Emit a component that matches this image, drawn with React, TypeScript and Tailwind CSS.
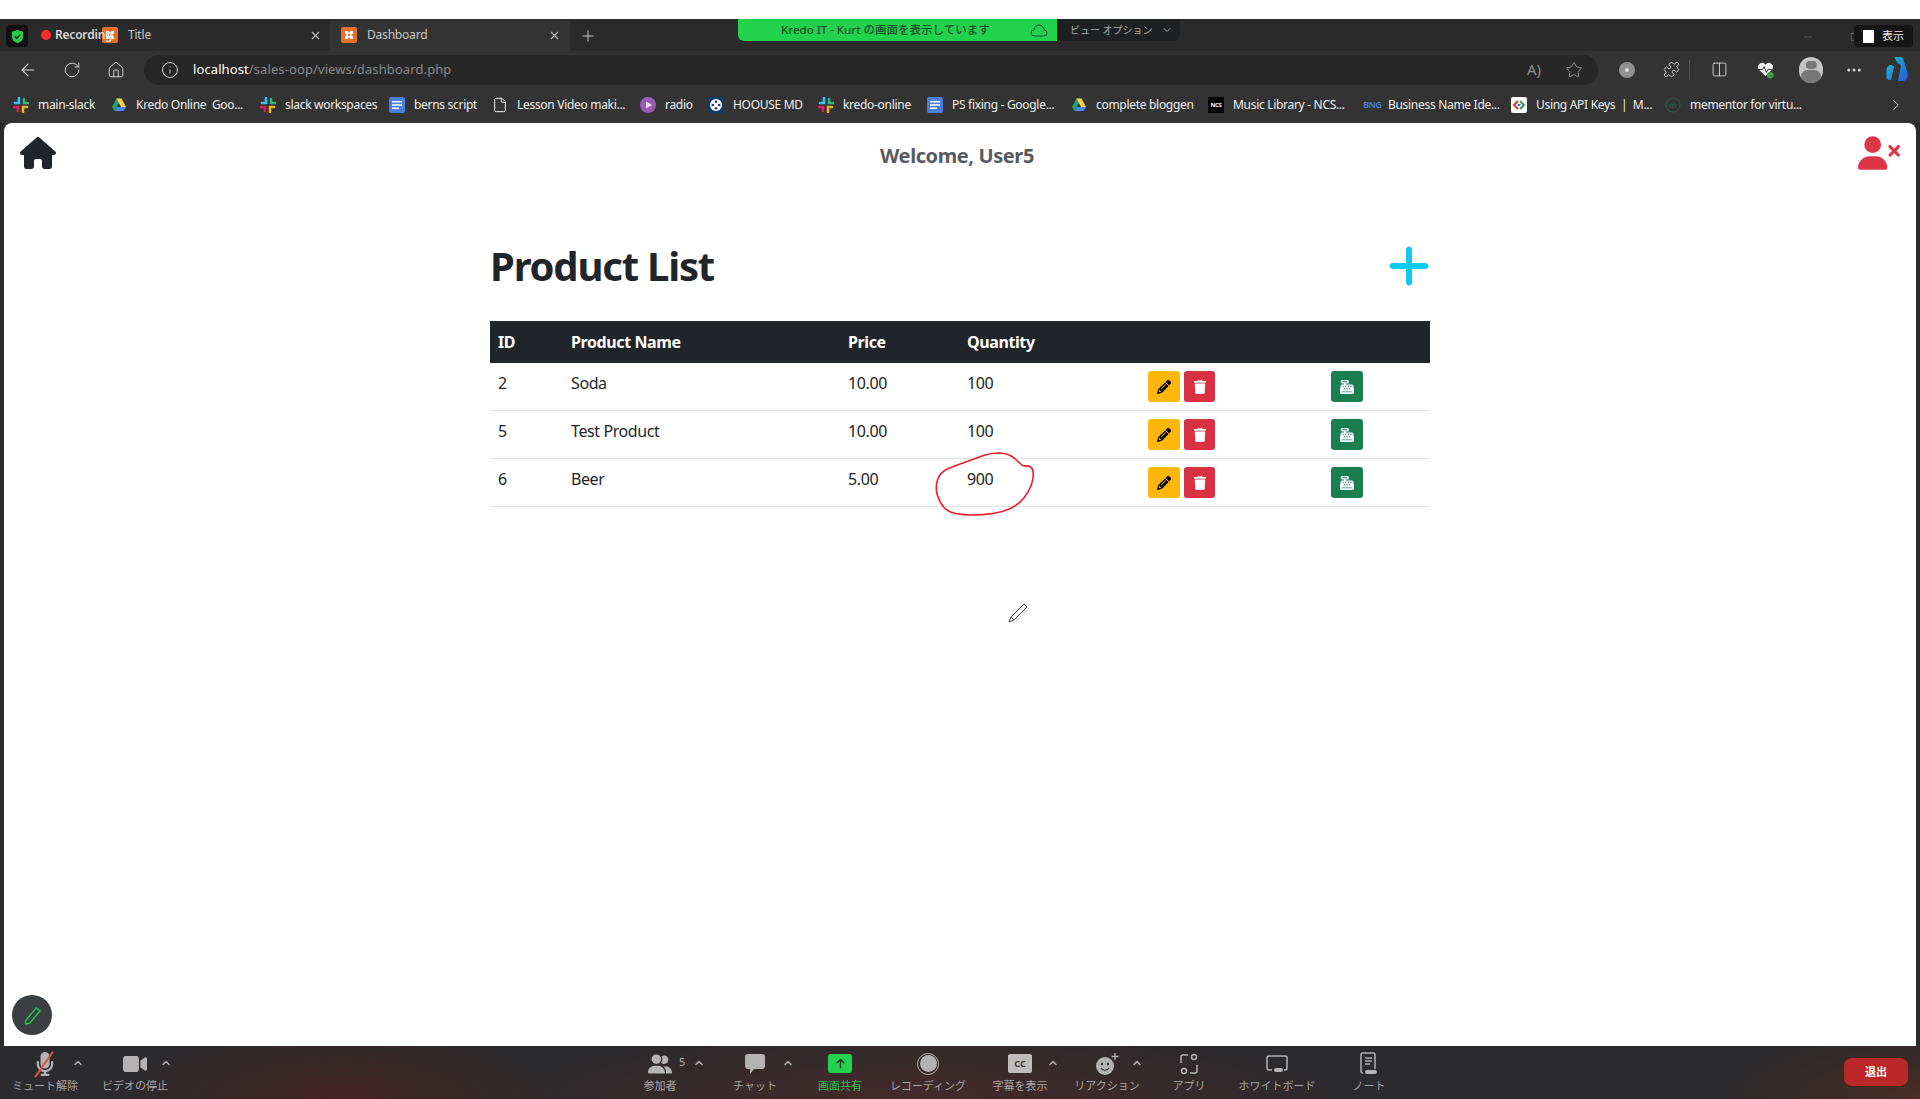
import type { ReactNode } from "react";
import {
  ArrowLeft,
  ChevronDown,
  ChevronRight,
  ChevronUp,
  Columns2,
  Ellipsis,
  File,
  Home,
  Info,
  Minus,
  Plus,
  Puzzle,
  RotateCw,
  Square,
  Star,
  X,
} from "lucide-react";
import {
  FaArrowUp,
  FaCashRegister,
  FaHouse,
  FaMicrophone,
  FaPencil,
  FaPlus,
  FaTrash,
  FaUserGroup,
  FaUserXmark,
  FaVideo,
} from "react-icons/fa6";

const UI_FONT = "font-['Noto_Sans','Noto_Sans_CJK_JP',sans-serif]";

function XamppIcon() {
  return (
    <svg viewBox="0 0 16 16" className="h-4 w-4 shrink-0">
      <rect width="16" height="16" rx="2" fill="#e8702a" />
      <path d="M4 4h2.500L8 6l1.500-2H12v2.500L10 8l2 1.500V12H9.500L8 10l-1.500 2H4V9.500L6 8 4 6.500z" fill="#fff" />
      <rect x="7" y="7" width="2" height="2" fill="#e8702a" />
    </svg>
  );
}

function SlackIcon() {
  return (
    <svg viewBox="0 0 16 16" className="h-4 w-4">
      <path d="M6 1v5H2" stroke="#36c5f0" strokeWidth="2.600" strokeLinecap="round" fill="none" />
      <path d="M15 6h-4V2" stroke="#2eb67d" strokeWidth="2.600" strokeLinecap="round" fill="none" />
      <path d="M10 15v-5h4" stroke="#ecb22e" strokeWidth="2.600" strokeLinecap="round" fill="none" />
      <path d="M1 10h4v4" stroke="#e01e5a" strokeWidth="2.600" strokeLinecap="round" fill="none" />
    </svg>
  );
}

function DriveIcon() {
  return (
    <svg viewBox="0 0 16 16" className="h-4 w-4">
      <path d="M5.500 1.500h5L6 9.500 3.500 14 1 10z" fill="#1fa463" />
      <path d="M10.500 1.500 15 10h-5L5.500 1.500z" fill="#ffd04b" />
      <path d="M3.500 14 6 10h9l-2.500 4z" fill="#4688f1" />
    </svg>
  );
}

function DocsIcon() {
  return (
    <svg viewBox="0 0 16 16" className="h-4 w-4">
      <rect width="16" height="16" rx="2" fill="#4a7fe0" />
      <path d="M3 4h10v1.500H3zM3 7.300h10v1.500H3zM3 10.600h7v1.500H3z" fill="#fff" />
    </svg>
  );
}

function RadioIcon() {
  return (
    <svg viewBox="0 0 16 16" className="h-4 w-4">
      <circle cx="8" cy="8" r="8" fill="#9a5fb4" />
      <path d="M6 4.500 12 8l-6 3.500z" fill="#f2dff5" />
    </svg>
  );
}

function ReelIcon() {
  return (
    <svg viewBox="0 0 16 16" className="h-4 w-4">
      <rect width="16" height="16" fill="#123a6b" />
      <circle cx="8" cy="8" r="6" fill="#fff" />
      <circle cx="8" cy="4.800" r="1.300" fill="#123a6b" />
      <circle cx="8" cy="11.200" r="1.300" fill="#123a6b" />
      <circle cx="4.800" cy="8" r="1.300" fill="#123a6b" />
      <circle cx="11.200" cy="8" r="1.300" fill="#123a6b" />
    </svg>
  );
}

function NcsIcon() {
  return (
    <span className="flex h-4 w-4 items-center justify-center bg-black text-[6px] font-bold leading-none text-white">
      NCS
    </span>
  );
}

function BngIcon() {
  return <span className="block w-4 text-[9px] font-semibold leading-4 tracking-tighter text-[#4a7fe0]">BNG</span>;
}

function ApiIcon() {
  return (
    <svg viewBox="0 0 16 16" className="h-4 w-4">
      <rect width="16" height="16" rx="2" fill="#fff" />
      <path d="M7 4 3 8l4 4" stroke="#d93a3a" strokeWidth="2" fill="none" />
      <path d="M9 4l4 4-4 4" stroke="#2e9e56" strokeWidth="2" fill="none" />
      <path d="M6.500 8h3" stroke="#4a6fe0" strokeWidth="2" />
    </svg>
  );
}

function MementorIcon() {
  return (
    <svg viewBox="0 0 16 16" className="h-4 w-4">
      <circle cx="8" cy="8" r="7" stroke="#2f5a4c" fill="none" />
      <path d="M5 11V7m3 4V7m3 4V7M5 7.500c1-1 3-1 3 0 0-1 3-1 3 0" stroke="#2f5a4c" fill="none" />
    </svg>
  );
}

type Bookmark = { label: string; icon: ReactNode; width: string };

const bookmarks: Bookmark[] = [
  { label: "main-slack", icon: <SlackIcon />, width: "w-[98px]" },
  { label: "Kredo Online  Goo...", icon: <DriveIcon />, width: "w-[149px]" },
  { label: "slack workspaces", icon: <SlackIcon />, width: "w-[129px]" },
  { label: "berns script", icon: <DocsIcon />, width: "w-[103px]" },
  { label: "Lesson Video maki...", icon: <File size={16} strokeWidth={1.5} />, width: "w-[148px]" },
  { label: "radio", icon: <RadioIcon />, width: "w-[68px]" },
  { label: "HOOUSE MD", icon: <ReelIcon />, width: "w-[110px]" },
  { label: "kredo-online", icon: <SlackIcon />, width: "w-[109px]" },
  { label: "PS fixing - Google...", icon: <DocsIcon />, width: "w-[144px]" },
  { label: "complete bloggen", icon: <DriveIcon />, width: "w-[137px]" },
  { label: "Music Library - NCS...", icon: <NcsIcon />, width: "w-[155px]" },
  { label: "Business Name Ide...", icon: <BngIcon />, width: "w-[148px]" },
  { label: "Using API Keys  |  M...", icon: <ApiIcon />, width: "w-[154px]" },
  { label: "mementor for virtu...", icon: <MementorIcon />, width: "w-[200px]" },
];

type Product = { id: number; name: string; price: string; quantity: number };

const products: Product[] = [
  { id: 2, name: "Soda", price: "10.00", quantity: 100 },
  { id: 5, name: "Test Product", price: "10.00", quantity: 100 },
  { id: 6, name: "Beer", price: "5.00", quantity: 900 },
];

// red pen loop round the 900, traced from the shared screen
const scribble = [
  [93, 21], [102, 20], [104, 32], [99, 47], [88, 60], [73, 67], [53, 70], [33, 70], [18, 67],
  [10, 58], [5, 43], [10, 27], [27, 20], [47, 13], [60, 8], [77, 8], [90, 17],
];

function smoothPath(points: number[][]) {
  let d = `M${points[0][0]} ${points[0][1]}`;
  for (let i = 1; i < points.length - 1; i++) {
    const midX = (points[i][0] + points[i + 1][0]) / 2;
    const midY = (points[i][1] + points[i + 1][1]) / 2;
    d += ` Q${points[i][0]} ${points[i][1]} ${midX} ${midY}`;
  }
  return d + ` L${points[0][0]} ${points[0][1]}`;
}

function BrowserTab({ title, active }: { title: string; active?: boolean }) {
  return (
    <div
      className={`flex h-8 items-center ${
        active ? "w-[240px] rounded-t-md bg-[#333333] pl-[11px] pr-[9px]" : "w-[228px] pl-0 pr-[8px]"
      }`}
    >
      <XamppIcon />
      <span className="ml-[10px] flex-1 text-[12px] tracking-[-0.2px] text-[#c8c8c8]">{title}</span>
      <X size={13} className="text-[#bdbdbd]" />
    </div>
  );
}

function TabBar() {
  return (
    <div className="flex h-8 shrink-0 items-end bg-[#2a2a2a] pl-[102px]">
      <BrowserTab title="Title" />
      <BrowserTab title="Dashboard" active />
      <Plus size={18} strokeWidth={1.3} className="mb-[6px] ml-[9px] text-[#c8c8c8]" />
      <div className="mb-[8px] ml-auto flex items-center pr-[60px] text-[#9a9a9a]">
        <Minus size={12} strokeWidth={1} />
        <Square size={10} strokeWidth={1} className="ml-[36px]" />
      </div>
    </div>
  );
}

function ToolBar() {
  return (
    <div className="flex h-[37px] shrink-0 items-center bg-[#333333] text-[#d6d6d6]">
      <ArrowLeft size={20} strokeWidth={1.3} className="ml-[18px]" />
      <RotateCw size={18} strokeWidth={1.3} className="ml-[25px]" />
      <Home size={18} strokeWidth={1.3} className="ml-[26px]" />
      <div className="ml-[19px] flex h-[30px] w-[1454px] items-center rounded-full bg-[#272727]">
        <Info size={18} strokeWidth={1.3} className="ml-[17px]" />
        <span className="ml-[14px] text-[13px] tracking-[0.1px] text-white">
          localhost<span className="text-[#8a8a8a]">/sales-oop/views/dashboard.php</span>
        </span>
        <span className="ml-auto text-[15px] leading-none text-[#8f8f8f]">A)</span>
        <Star size={18} strokeWidth={1.2} className="ml-[24px] mr-[15px] text-[#9a9a9a]" />
      </div>
      <div className="ml-[21px] flex h-4 w-4 items-center justify-center rounded-full bg-[#8f8f8f]">
        <span className="h-1 w-1 rounded-full bg-[#dcdcdc]" />
      </div>
      <Puzzle size={17} strokeWidth={1.3} className="ml-[28px]" />
      <div className="ml-[9px] h-5 w-px bg-[#505050]" />
      <Columns2 size={17} strokeWidth={1.3} className="ml-[21px]" />
      <svg viewBox="0 0 20 20" className="ml-[28px] h-[19px] w-[19px]">
        <path d="M10 17 3 10a4 4 0 0 1 7-5 4 4 0 0 1 7 5z" fill="#eeeeee" />
        <path d="M3 10h4l1.500-3 2.500 6 1.500-3h4" stroke="#333" strokeWidth="1" fill="none" />
        <circle cx="15" cy="16" r="3.500" fill="#3f9a45" />
      </svg>
      <div className="ml-[24px] flex h-[26px] w-[24px] flex-col items-center overflow-hidden rounded-full bg-[#c4c4c4]">
        <span className="mt-1 h-[11px] w-[11px] rounded-full bg-[#777777]" />
        <span className="mt-px h-4 w-[20px] rounded-full bg-[#777777]" />
      </div>
      <Ellipsis size={18} className="ml-[22px]" />
      <svg viewBox="0 0 24 28" className="ml-[22px] h-[27px] w-[24px]">
        <defs>
          <linearGradient id="copilot" x1="0" y1="0" x2="1" y2="1">
            <stop offset="0" stopColor="#35c1a0" />
            <stop offset="0.500" stopColor="#1b8ee0" />
            <stop offset="1" stopColor="#2a55d8" />
          </linearGradient>
        </defs>
        <path d="M9 1h7c2 0 2 1 3 4l4 13c1 3-1 8-5 8h-5l3-15c0-3-2-3-3-3zM1 15c0-3 2-6 5-6l3 2-3 13c-1 2-5 1-5-3z" fill="url(#copilot)" />
      </svg>
    </div>
  );
}

function BookmarkBar() {
  return (
    <div className="flex h-[35px] shrink-0 items-center pb-px bg-[#333333] pl-[13px] text-[12px] tracking-[-0.3px] text-[#f0f0f0]">
      {bookmarks.map((bookmark, index) => (
        <div key={index} className={`flex shrink-0 items-center gap-[9px] whitespace-pre ${bookmark.width}`}>
          {bookmark.icon}
          <span>{bookmark.label}</span>
        </div>
      ))}
      <ChevronRight size={18} strokeWidth={1.3} className="ml-[22px] text-[#cfcfcf]" />
    </div>
  );
}

function ProductRow({ product }: { product: Product }) {
  return (
    <tr className="border-b border-[#dee2e6]">
      <td className="p-2 align-top">{product.id}</td>
      <td className="p-2 align-top">{product.name}</td>
      <td className="p-2 align-top">{product.price}</td>
      <td className="p-2 align-top">{product.quantity}</td>
      <td className="p-2 align-top">
        <div className="flex gap-1">
          <button className="flex h-[31px] w-8 items-center justify-center rounded-[3px] bg-[#ffb707] text-black">
            <FaPencil size={14} />
          </button>
          <button className="flex h-[31px] w-[31px] items-center justify-center rounded-[3px] bg-[#d93044] text-white">
            <FaTrash size={14} />
          </button>
        </div>
      </td>
      <td className="p-2 align-top">
        <button className="flex h-[31px] w-8 items-center justify-center rounded-[3px] bg-[#1a7f50] text-white">
          <FaCashRegister size={14} />
        </button>
      </td>
    </tr>
  );
}

function ProductTable() {
  return (
    <table className="w-full table-fixed text-[16px] tracking-[-0.4px] text-[#212529]">
      <thead className="bg-[#212529] text-left font-bold text-white">
        <tr>
          <th className="h-[42px] w-[73px] px-2">ID</th>
          <th className="w-[277px] px-2">Product Name</th>
          <th className="w-[119px] px-2">Price</th>
          <th className="w-[181px] px-2">Quantity</th>
          <th className="w-[183px] px-2"></th>
          <th className="px-2"></th>
        </tr>
      </thead>
      <tbody>
        {products.map((product) => (
          <ProductRow key={product.id} product={product} />
        ))}
      </tbody>
    </table>
  );
}

function PageContent() {
  return (
    <main className="relative mx-1 min-h-0 flex-1 rounded-t-lg bg-white">
      <nav className="flex h-[56px] items-start justify-between pl-[16px] pr-[16px] pt-[12px]">
        <FaHouse size={36} className="text-[#212529]" />
        <span className="pt-[6px] text-[20px] font-bold tracking-[-0.4px] text-[#555b60]">Welcome, User5</span>
        <FaUserXmark size={42} className="mt-[-3px] text-[#dc3545]" />
      </nav>
      <section className="mx-auto w-[940px] pt-[55px]">
        <div className="mb-[24px] flex h-[63px] items-center justify-between">
          <h1 className="text-[40px] font-bold tracking-[-1.2px] text-[#212529]">Product List</h1>
          <FaPlus size={48} className="mr-[-3px] text-[#0dcaf0]" />
        </div>
        <ProductTable />
      </section>
    </main>
  );
}

type ZoomItem = {
  label: string;
  icon: ReactNode;
  width: string;
  chevron?: string;
  green?: boolean;
};

const leftItems: ZoomItem[] = [
  {
    label: "ミュート解除",
    width: "w-[90px]",
    chevron: "left-[72px]",
    icon: (
      <span className="relative block">
        <FaMicrophone size={24} />
        <span className="absolute left-[10px] top-[-3px] h-[31px] w-[2px] rotate-[35deg] bg-[#d9534f]" />
      </span>
    ),
  },
  { label: "ビデオの停止", width: "w-[90px]", chevron: "left-[70px]", icon: <FaVideo size={24} /> },
];

const centerItems: ZoomItem[] = [
  {
    label: "参加者",
    width: "w-[96px]",
    chevron: "left-[81px]",
    icon: (
      <span className="relative block">
        <FaUserGroup size={24} />
        <span className="absolute left-[31px] top-[2px] text-[11px] leading-4">5</span>
      </span>
    ),
  },
  {
    label: "チャット",
    width: "w-[94px]",
    chevron: "left-[74px]",
    icon: (
      <svg viewBox="0 0 22 22" className="h-[22px] w-[22px]">
        <path d="M4 1h14a3 3 0 0 1 3 3v9a3 3 0 0 1-3 3h-8l-4 5v-5H4a3 3 0 0 1-3-3V4a3 3 0 0 1 3-3z" fill="currentColor" />
      </svg>
    ),
  },
  {
    label: "画面共有",
    width: "w-[76px]",
    green: true,
    icon: (
      <span className="flex h-[19px] w-[24px] items-center justify-center rounded-[3px] bg-[#22d24e] text-[#12351c]">
        <FaArrowUp size={11} />
      </span>
    ),
  },
  {
    label: "レコーディング",
    width: "w-[100px]",
    icon: (
      <span className="flex h-[22px] w-[22px] items-center justify-center rounded-full border border-current">
        <span className="h-[17px] w-[17px] rounded-full bg-current" />
      </span>
    ),
  },
  {
    label: "字幕を表示",
    width: "w-[84px]",
    chevron: "left-[69px]",
    icon: (
      <span className="flex h-[19px] w-[24px] items-center justify-center rounded-[2px] bg-[#c0bcbc] text-[9px] font-bold text-[#3a3a3a]">
        CC
      </span>
    ),
  },
  {
    label: "リアクション",
    width: "w-[90px]",
    chevron: "left-[69px]",
    icon: (
      <svg viewBox="0 0 24 24" className="h-[24px] w-[24px]">
        <circle cx="10" cy="14" r="9" fill="currentColor" />
        <circle cx="7" cy="12" r="1.200" fill="#333" />
        <circle cx="13" cy="12" r="1.200" fill="#333" />
        <path d="M6 16c2 3 6 3 8 0" stroke="#333" strokeWidth="1.200" fill="none" />
        <path d="M20 1v7M16.500 4.500h7" stroke="currentColor" strokeWidth="1.300" />
      </svg>
    ),
  },
  {
    label: "アプリ",
    width: "w-[74px]",
    icon: (
      <svg viewBox="0 0 20 22" className="h-[22px] w-[20px]" fill="none" stroke="currentColor" strokeWidth="1.500">
        <path d="M9 2H4a2 2 0 0 0-2 2v6M11 20h5a2 2 0 0 0 2-2v-6" />
        <circle cx="15" cy="4" r="2.500" />
        <circle cx="5" cy="18" r="2.500" />
      </svg>
    ),
  },
  {
    label: "ホワイトボード",
    width: "w-[102px]",
    icon: (
      <svg viewBox="0 0 24 22" className="h-[22px] w-[24px]" fill="none" stroke="currentColor" strokeWidth="1.500">
        <path d="M7 17H4a2 2 0 0 1-2-2V5a2 2 0 0 1 2-2h16a2 2 0 0 1 2 2v10a2 2 0 0 1-2 2h-1" />
        <rect x="9" y="15" width="9" height="4" rx="2" fill="currentColor" stroke="none" />
      </svg>
    ),
  },
  {
    label: "ノート",
    width: "w-[82px]",
    icon: (
      <svg viewBox="0 0 18 24" className="h-[24px] w-[18px]" fill="none" stroke="currentColor" strokeWidth="1.500">
        <path d="M3 21a2 2 0 0 1-2-2V3a2 2 0 0 1 2-2h10a2 2 0 0 1 2 2v14" />
        <path d="M5 6h7M5 9h7M5 12h5" />
        <rect x="5" y="18" width="12" height="4" rx="2" fill="currentColor" stroke="none" />
      </svg>
    ),
  },
];

function ZoomButton({ item }: { item: ZoomItem }) {
  return (
    <div className={`relative flex shrink-0 flex-col items-center pt-[2px] ${item.width}`}>
      <div className="flex h-[31px] items-center text-[#b4b2b2]">{item.icon}</div>
      {item.chevron && <ChevronUp size={12} strokeWidth={3} className={`absolute top-[11px] text-[#b4b2b2] ${item.chevron}`} />}
      <span className={`whitespace-nowrap text-[11px] leading-[14px] ${item.green ? "text-[#22c64a]" : "text-[#a8a6a6]"}`}>
        {item.label}
      </span>
    </div>
  );
}

function ZoomBar() {
  return (
    <footer className="flex h-[53px] shrink-0 items-start bg-[#2b2a2c] bg-[radial-gradient(ellipse_220px_70px_at_340px_100%,#452321,transparent),radial-gradient(ellipse_420px_70px_at_920px_100%,#46292a,transparent),radial-gradient(ellipse_200px_70px_at_1920px_100%,#4a2c24,transparent)]">
      {leftItems.map((item) => (
        <ZoomButton key={item.label} item={item} />
      ))}
      <div className="ml-[432px] flex">
        {centerItems.map((item) => (
          <ZoomButton key={item.label} item={item} />
        ))}
      </div>
      <button className="ml-[434px] mt-3 h-[28px] w-[64px] rounded-lg bg-[#bb2626] text-[11px] font-bold text-white">退出</button>
    </footer>
  );
}

function ZoomOverlays() {
  return (
    <>
      <div className="absolute left-[6px] top-[25px] flex h-[22px] w-[22px] items-center justify-center rounded-[4px] bg-[#111111]">
        <svg viewBox="0 0 16 16" className="h-[15px] w-[15px]">
          <path d="M8 1l6 2v5c0 3.500-2.500 6-6 7-3.500-1-6-3.500-6-7V3z" fill="#2ec94f" />
          <path d="M5 8l2 2 4-4" stroke="#111" strokeWidth="1.500" fill="none" />
        </svg>
      </div>
      <div className="absolute left-[41px] top-[30px] h-[10px] w-[10px] rounded-full bg-[#ff2b2b]" />
      <span className="absolute left-[55px] top-[26px] text-[12px] font-semibold tracking-[-0.2px] text-[#d8d8d8]">Recording</span>
      <div className="absolute left-[738px] top-[19px] flex h-[22px] w-[442px] items-center overflow-hidden rounded-b-md bg-[#1f2022] text-[10px]">
        <div className="flex h-full w-[319px] items-center bg-[#22d24e] pl-[43px] text-[#16502a]">
          <span className="text-[11.500px] font-medium">Kredo IT - Kurt の画面を表示しています</span>
          <svg viewBox="0 0 18 14" className="ml-[40px] h-[14px] w-[18px]" fill="none" stroke="#16502a">
            <path d="M5 13H4a3 3 0 0 1 0-6 5 5 0 0 1 10 0 3 3 0 0 1 0 6z" />
          </svg>
        </div>
        <span className="ml-[13px] text-[#a9a9a9]">ビュー オプション</span>
        <ChevronDown size={12} className="ml-2 text-[#a9a9a9]" />
      </div>
      <div className="absolute left-[1854px] top-[25px] flex h-[22px] w-[59px] items-center justify-center gap-2 rounded bg-[#151515] text-[11px] text-[#e6e6e6]">
        <span className="h-[13px] w-[11px] bg-white" />
        表示
      </div>
      <svg viewBox="0 0 110 85" className="absolute left-[930px] top-[445px] h-[85px] w-[110px]" fill="none" stroke="#ee1c25" strokeWidth="1.600">
        <path d={smoothPath(scribble)} />
      </svg>
      <svg viewBox="0 0 20 20" className="absolute left-[1008px] top-[603px] h-[20px] w-[20px]" fill="#fff" stroke="#333" strokeWidth="0.900">
        <path d="M16 1l3 3L6 17l-5 2 2-5z" />
        <path d="M3 14l3 3" />
      </svg>
      <div className="absolute left-[12px] top-[995px] flex h-10 w-10 items-center justify-center rounded-full bg-[#3c3f42]">
        <svg viewBox="0 0 20 20" className="h-[19px] w-[19px]" fill="none" stroke="#22d24e" strokeWidth="1.300">
          <path d="M14 2l4 3L7 18l-4 1 0-4z" />
        </svg>
      </div>
    </>
  );
}

export default function App() {
  return (
    <div className={`relative flex h-[1099px] w-[1920px] flex-col overflow-hidden bg-[#2a2a2a] ${UI_FONT}`}>
      <div className="h-[19px] shrink-0 bg-white" />
      <TabBar />
      <ToolBar />
      <BookmarkBar />
      <PageContent />
      <ZoomBar />
      <ZoomOverlays />
    </div>
  );
}
